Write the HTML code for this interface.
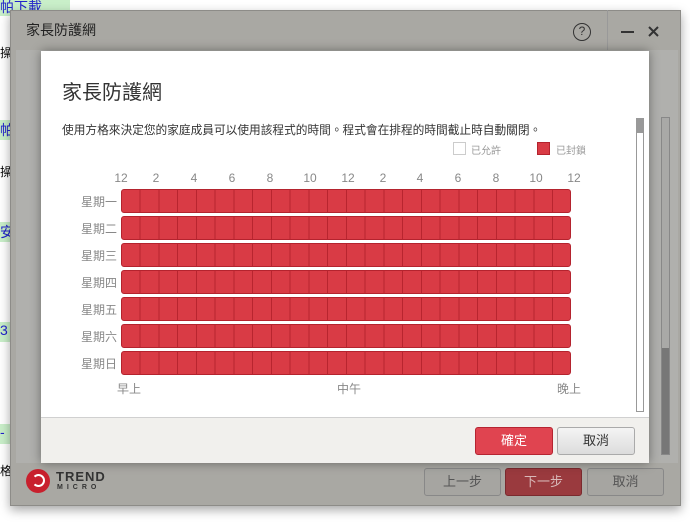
<!DOCTYPE html>
<html><head><meta charset="utf-8"><style>
*{margin:0;padding:0;box-sizing:border-box}
body{width:690px;height:523px;background:#fff;position:relative;overflow:hidden;font-family:"Liberation Sans","Noto Sans CJK TC",sans-serif}
.a{position:absolute}
.row{position:absolute;left:121px;width:450px;height:24px;background-color:#d93b45;border:1px solid #b4232e;border-radius:3px;
background-image:repeating-linear-gradient(90deg,transparent 0,transparent 17.75px,#b8252f 17.75px,#b8252f 18.75px)}
.lbl{position:absolute;left:70px;width:47px;text-align:right;font-size:12px;color:#888}
.hr{position:absolute;top:171px;width:30px;margin-left:-15px;text-align:center;font-size:12px;color:#888}
</style></head><body>
<div class="a" style="left:0;top:0;width:70px;height:16px;background:#c9efc9;color:#22c;font-size:14px;line-height:14px">帕下載</div>
<div class="a" style="left:0;top:44px;font-size:12px">操</div>
<div class="a" style="left:0;top:120px;width:16px;height:20px;background:#c9efc9;color:#22c;font-size:14px">帕</div>
<div class="a" style="left:0;top:163px;font-size:12px">操</div>
<div class="a" style="left:0;top:222px;width:16px;height:20px;background:#c9efc9;color:#22c;font-size:14px">安</div>
<div class="a" style="left:0;top:322px;width:16px;height:20px;background:#c9efc9;color:#22c;font-size:14px">3</div>
<div class="a" style="left:0;top:424px;width:16px;height:20px;background:#c9efc9;color:#22c;font-size:14px">-</div>
<div class="a" style="left:0;top:462px;font-size:12px">格</div>
<div class="a" style="left:10px;top:10px;width:671px;height:496px;background:#a9a8a3;border:1px solid #8d8c88;box-shadow:0 4px 10px rgba(0,0,0,.35)"></div>
<div class="a" style="left:26px;top:20px;font-size:14px;color:#222">家長防護網</div>
<div class="a" style="left:573px;top:23px;width:18px;height:18px;border:1.5px solid #333;border-radius:50%;font-size:12px;text-align:center;line-height:15px;color:#333">?</div>
<div class="a" style="left:607px;top:10px;width:1px;height:40px;background:#999"></div>
<div class="a" style="left:621px;top:31px;width:13px;height:2px;background:#333"></div>
<svg class="a" style="left:648px;top:26px" width="11" height="11"><path d="M1 1L10 10M10 1L1 10" stroke="#333" stroke-width="2"/></svg>
<div class="a" style="left:16px;top:50px;width:662px;height:413px;background:#b0b0ad"></div>
<div class="a" style="left:661px;top:117px;width:9px;height:338px;border:1px solid #888;background:#a9a9a7"></div>
<div class="a" style="left:662px;top:348px;width:7px;height:106px;background:#777"></div>
<div class="a" style="left:26px;top:469px;width:24px;height:24px;border-radius:50%;background:#c8202d"></div>
<div class="a" style="left:32px;top:474px;width:13px;height:13px;border:2px solid #fff;border-radius:50%;border-left-color:transparent"></div>
<div class="a" style="left:56px;top:469px;font-size:13px;font-weight:bold;color:#333;letter-spacing:1px">TREND</div>
<div class="a" style="left:57px;top:484px;font-size:7px;font-weight:bold;color:#333;letter-spacing:4px">MICRO</div>
<div class="a" style="left:424px;top:468px;width:77px;height:28px;border:1px solid #888;border-radius:3px;background:#a6a5a1;text-align:center;line-height:26px;font-size:13px;color:#555">上一步</div>
<div class="a" style="left:505px;top:468px;width:77px;height:28px;border:1px solid #7a2a2e;border-radius:3px;background:#9a3a3e;text-align:center;line-height:26px;font-size:13px;color:#d8b8b8">下一步</div>
<div class="a" style="left:587px;top:468px;width:77px;height:28px;border:1px solid #888;border-radius:3px;background:#a6a5a1;text-align:center;line-height:26px;font-size:13px;color:#555">取消</div>
<div class="a" style="left:41px;top:51px;width:608px;height:412px;background:#fff;box-shadow:0 0 10px rgba(0,0,0,.4)"></div>
<div class="a" style="left:41px;top:417px;width:608px;height:46px;background:#f1f0ed;border-top:1px solid #d0d0d0"></div>
<div class="a" style="left:62px;top:76px;font-size:20px;color:#333">家長防護網</div>
<div class="a" style="left:62px;top:121px;font-size:11.7px;color:#333">使用方格來決定您的家庭成員可以使用該程式的時間。程式會在排程的時間截止時自動關閉。</div>
<div class="a" style="left:453px;top:142px;width:13px;height:13px;border:1px solid #ccc"></div>
<div class="a" style="left:471px;top:142px;font-size:10px;color:#999">已允許</div>
<div class="a" style="left:537px;top:142px;width:13px;height:13px;background:#d93b45;border:1px solid #b4232e"></div>
<div class="a" style="left:556px;top:142px;font-size:10px;color:#999">已封鎖</div>
<div class="hr" style="left:121px">12</div><div class="hr" style="left:156px">2</div><div class="hr" style="left:194px">4</div><div class="hr" style="left:232px">6</div><div class="hr" style="left:270px">8</div><div class="hr" style="left:310px">10</div><div class="hr" style="left:348px">12</div><div class="hr" style="left:383px">2</div><div class="hr" style="left:420px">4</div><div class="hr" style="left:458px">6</div><div class="hr" style="left:496px">8</div><div class="hr" style="left:536px">10</div><div class="hr" style="left:574px">12</div>
<div class="lbl" style="top:193px">星期一</div><div class="row" style="top:189px"></div>
<div class="lbl" style="top:220px">星期二</div><div class="row" style="top:216px"></div>
<div class="lbl" style="top:247px">星期三</div><div class="row" style="top:243px"></div>
<div class="lbl" style="top:274px">星期四</div><div class="row" style="top:270px"></div>
<div class="lbl" style="top:301px">星期五</div><div class="row" style="top:297px"></div>
<div class="lbl" style="top:328px">星期六</div><div class="row" style="top:324px"></div>
<div class="lbl" style="top:355px">星期日</div><div class="row" style="top:351px"></div>
<div class="a" style="left:117px;top:380px;font-size:12px;color:#888">早上</div>
<div class="a" style="left:337px;top:380px;font-size:12px;color:#888">中午</div>
<div class="a" style="left:557px;top:380px;font-size:12px;color:#888">晚上</div>
<div class="a" style="left:636px;top:118px;width:8px;height:294px;border:1px solid #999;background:#fff"></div>
<div class="a" style="left:637px;top:119px;width:6px;height:14px;background:#999"></div>
<div class="a" style="left:475px;top:427px;width:78px;height:28px;border:1px solid #b52431;border-radius:3px;background:#e04450;color:#fff;text-align:center;line-height:26px;font-size:13px">確定</div>
<div class="a" style="left:557px;top:427px;width:78px;height:28px;border:1px solid #aaa;border-radius:3px;background:linear-gradient(#f4f4f4,#dcdcdc);color:#333;text-align:center;line-height:26px;font-size:13px">取消</div>
</body></html>
